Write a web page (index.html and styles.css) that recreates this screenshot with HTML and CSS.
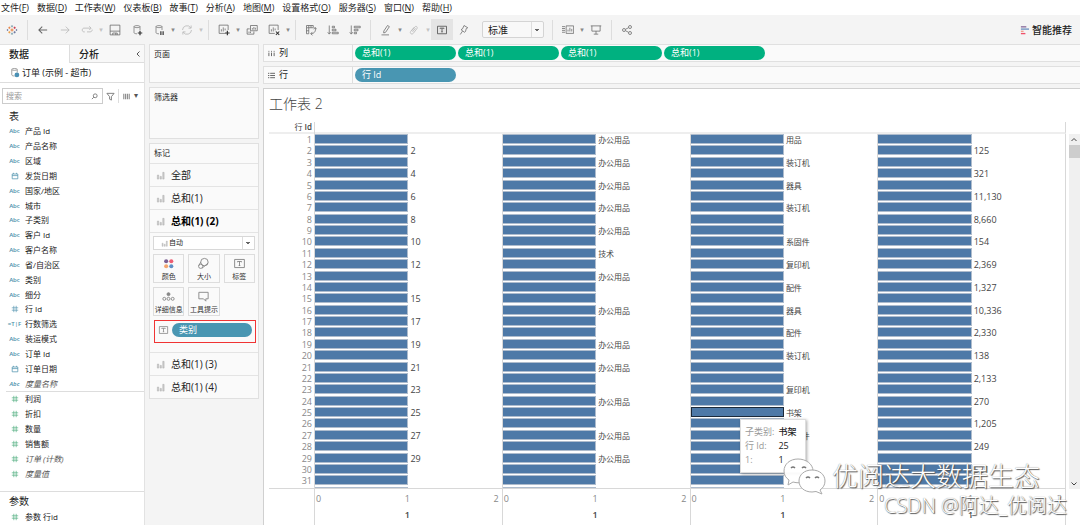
FILE: index.html
```html
<!DOCTYPE html>
<html lang="zh-CN">
<head>
<meta charset="utf-8">
<title>工作表 2</title>
<link rel="stylesheet" href="styles.css">
</head>
<body>
<svg class="defs" aria-hidden="true">
  <symbol id="i-bars" viewBox="0 0 10 10"><path d="M1.500 4.500v4.500h1.500V4.500zM4.500 6v3H6V6zM7.500 1.500V9H9V1.500z" fill="#ccc" stroke="#aaa" stroke-width=".5"/></symbol>
  <symbol id="i-db" viewBox="0 0 16 16"><path d="M4 3.500v8c0 1 2 1.600 4 1.600M12 8V3.500M4 3.500c0-1.800 8-1.800 8 0s-8 1.800-8 0" fill="none" stroke="#777"/></symbol>
  <symbol id="i-t" viewBox="0 0 16 16"><path d="M2 3h12v10H2zM5.500 6.500v-1h5v1M8 5.500v5M7 10.500h2" fill="none" stroke="currentColor"/></symbol>
  <symbol id="i-cal" viewBox="0 0 10 10"><path d="M1.500 2.500h7v6h-7zM1.500 4.500h7M3 1v1.500M7 1v1.500" fill="none" stroke="#4a90ab" stroke-width=".9"/></symbol>
  <symbol id="i-hash" viewBox="0 0 10 10"><path d="M3.500 1v8M6.500 1v8M1 3.500h8M1 6.500h8" fill="none" stroke="currentColor" stroke-width=".8"/></symbol>
</svg>
<div class="app">
  <nav class="menu">
    <a href="#">文件(<u>F</u>)</a><a href="#">数据(<u>D</u>)</a><a href="#">工作表(<u>W</u>)</a><a href="#">仪表板(<u>B</u>)</a><a href="#">故事(<u>T</u>)</a><a href="#">分析(<u>A</u>)</a><a href="#">地图(<u>M</u>)</a><a href="#">设置格式(<u>O</u>)</a><a href="#">服务器(<u>S</u>)</a><a href="#">窗口(<u>N</u>)</a><a href="#">帮助(<u>H</u>)</a>
  </nav>
  <div class="toolbar">
    <button class="tb" aria-label="开始"><svg viewBox="0 0 16 16"><path d="M8 6v4M6 8h4" stroke="#e8762d" stroke-width="1.200"/><path d="M8 1.500v3M6.500 3h3M8 11.500v3M6.500 13h3" stroke="#7199a6"/><path d="M4.500 3.500v3M3 5h3" stroke="#e8762d"/><path d="M11.500 3.500v3M10 5h3" stroke="#c72035"/><path d="M4.500 9.500v3M3 11h3" stroke="#eb912c"/><path d="M11.500 9.500v3M10 11h3" stroke="#5b6591"/><path d="M2 7v2M1 8h2M14 7v2M13 8h2" stroke="#5b6591"/></svg></button>
    <i class="sep"></i>
    <button class="tb" aria-label="后退"><svg viewBox="0 0 16 16"><path d="M13.500 8h-11M7 3.500L2.500 8 7 12.500" stroke-width="1.400"/></svg></button>
    <button class="tb dim" aria-label="前进"><svg viewBox="0 0 16 16"><path d="M2.500 8h11M9 3.500L13.500 8 9 12.500"/></svg></button>
    <button class="tb dim" aria-label="重做"><svg viewBox="0 0 16 16"><path d="M5 10.500H4C.8 10.500 1 5.500 4 5.500h9M11 3l2.500 2.500L11 8M8 10.500h4c2 0 3-1.500 3-3"/></svg></button>
    <button class="caret dim" aria-label="更多">▾</button>
    <button class="tb" aria-label="保存"><svg viewBox="0 0 16 16"><path d="M1.500 1.500h13v13h-13zM1.500 9.500h13M5 14.500v-2.500h6v2.500M9 12v2.500"/></svg></button>
    <button class="tb" aria-label="新建数据源"><svg viewBox="0 0 16 16"><use href="#i-db"/><path d="M12 9v6M9 12h6" stroke="#333" stroke-width="1.600"/></svg></button>
    <button class="tb" aria-label="暂停更新"><svg viewBox="0 0 16 16"><use href="#i-db"/><path d="M10.500 9.500v5M13.500 9.500v5" stroke="#333" stroke-width="1.600"/></svg></button>
    <button class="caret" aria-label="更多">▾</button>
    <button class="tb dim" aria-label="刷新"><svg viewBox="0 0 16 16"><path d="M2 8a6 6 0 0 1 11-3M14 8a6 6 0 0 1-11 3M13.500 2v3.500H10M2.500 14v-3.500H6"/></svg></button>
    <button class="caret dim" aria-label="更多">▾</button>
    <i class="sep"></i>
    <button class="tb" aria-label="新建工作表"><svg viewBox="0 0 16 16"><path d="M10 12.500H1.500v-11h12V8M4.500 10V7M7 10V4.500M9.500 8.500V6"/><path d="M12.500 9v6M9.500 12h6" stroke="#333" stroke-width="1.600"/></svg></button>
    <button class="caret" aria-label="更多">▾</button>
    <button class="tb" aria-label="复制"><svg viewBox="0 0 16 16"><path d="M6 2h9v7H6zM5 6.500H1.500v7h9V10M8.500 7.500v-2M10.500 7.500V4M12.500 7.500V5M4 12v-2M6 12v-2"/></svg></button>
    <button class="tb" aria-label="清除"><svg viewBox="0 0 16 16"><path d="M9 12.500H1.500v-11h12V8M4.500 10V7M7 10V4.500M9.500 8.500V6"/><path d="M10.500 10l4.500 4.500M15 10l-4.500 4.500" stroke="#333" stroke-width="1.400"/></svg></button>
    <button class="caret" aria-label="更多">▾</button>
    <i class="sep"></i>
    <button class="tb" aria-label="交换行和列"><svg viewBox="0 0 16 16"><path d="M2 2h9v3H2zM2 5v8h3V5M5 2v3M8 2v3M2 9h3M13.500 5c1.500 4-1 8-5.500 8M10 10.500L7.500 13l2.500 2M11.500 7l2-2.500L15.500 7"/></svg></button>
    <button class="tb" aria-label="升序"><svg viewBox="0 0 16 16"><path d="M3 2v11M1 11l2 2.500L5 11M7 3h3v2H7zM7 7h5v2H7zM7 11h8v2H7z"/></svg></button>
    <button class="tb" aria-label="降序"><svg viewBox="0 0 16 16"><path d="M3 2v11M1 11l2 2.500L5 11M7 3h8v2H7zM7 7h5v2H7zM7 11h3v2H7z"/></svg></button>
    <i class="sep"></i>
    <button class="tb" aria-label="突出显示"><svg viewBox="0 0 16 16"><path d="M5 9.500L10 2l2.500 1.500-5 7.500L5 12zM2 14.500h10"/></svg></button>
    <button class="caret" aria-label="更多">▾</button>
    <button class="tb dim" aria-label="组"><svg viewBox="0 0 16 16"><path d="M5 9l4-5c2-2 4 0 3 2l-5 6.500c-2 2-5 0-3.500-2.500L8 4.500M6 10.500l4-5"/></svg></button>
    <button class="caret dim" aria-label="更多">▾</button>
    <button class="tb on" aria-label="显示标签"><svg viewBox="0 0 16 16"><use href="#i-t"/></svg></button>
    <button class="tb" aria-label="固定"><svg viewBox="0 0 16 16"><path d="M8 2l5 3-2 1-1 4-1.500 1L4 7.500 6 6.500zM6 9.500L3 14"/></svg></button>
    <select class="fit" aria-label="适合"><option>标准</option></select>
    <i class="sep"></i>
    <button class="tb" aria-label="显示卡"><svg viewBox="0 0 16 16"><path d="M5.500 2.500h10v10h-10zM8 10V7.500M10.500 10V5M13 10V6.500M0 3.500h4M0 6h4M0 8.500h4M0 11h4"/></svg></button>
    <button class="caret" aria-label="更多">▾</button>
    <button class="tb" aria-label="演示模式"><svg viewBox="0 0 16 16"><path d="M1 2.500h14M2.500 2.500v7h11v-7M8 9.500v4M5 13.500h6"/></svg></button>
    <i class="sep"></i>
    <button class="tb" aria-label="共享"><svg viewBox="0 0 16 16"><circle cx="4" cy="8" r="2"/><circle cx="12" cy="4" r="2"/><circle cx="12" cy="12" r="2"/><path d="M6 7l4-2M6 9l4 2"/></svg></button>
    <button class="showme"><svg viewBox="0 0 10 10"><path d="M1 1.500h6" stroke="#8a6c9c" stroke-width="1.500"/><path d="M1 4h9" stroke="#6f93c0" stroke-width="1.500"/><path d="M1 6.500h3" stroke="#f2a08e" stroke-width="1.500"/><path d="M1 9h5" stroke="#f0506a" stroke-width="1.500"/></svg>智能推荐</button>
  </div>

  <main class="work">
    <aside class="data">
      <div class="tabs"><button class="tab">数据</button><button class="tab off">分析<svg viewBox="0 0 6 8"><path d="M4.500 1.500L2 4l2.500 2.500" fill="none" stroke="#555"/></svg></button></div>
      <div class="source"><svg viewBox="0 0 16 16"><use href="#i-db"/><circle cx="11.500" cy="11.500" r="3.500" fill="#4a90b4"/></svg>订单 (示例 - 超市)</div>
      <div class="find">
        <label class="box"><input type="text" placeholder="搜索" aria-label="搜索"><svg viewBox="0 0 8 8"><circle cx="4.800" cy="3.200" r="2.200" fill="none" stroke="#777"/><path d="M3.200 4.800L1 7" stroke="#777"/></svg></label>
        <button aria-label="筛选"><svg viewBox="0 0 10 10"><path d="M1 1.500h8L6 5.200V9L4 8V5.200z" fill="none" stroke="#777"/></svg></button>
        <i></i>
        <button aria-label="视图"><svg viewBox="0 0 10 10"><path d="M2 2v6M4 2v6M6 2v6M8 2v6" stroke="#888" stroke-width="1.200"/></svg></button>
        <button class="arrow" aria-label="更多">▾</button>
      </div>
      <h2>表</h2>
      <ul class="fields dims" id="dims"></ul>
      <ul class="fields meas" id="meas"></ul>
      <div class="params"><h2>参数</h2><ul class="fields"><li class="g"><b><svg viewBox="0 0 10 10"><use href="#i-hash"/></svg></b>参数 行id</li></ul></div>
    </aside>

    <aside class="cards">
      <section class="card pages"><h3>页面</h3></section>
      <section class="card filters"><h3>筛选器</h3></section>
      <section class="card marks">
        <h3>标记</h3>
        <button class="mark"><svg><use href="#i-bars"/></svg>全部</button>
        <button class="mark"><svg><use href="#i-bars"/></svg>总和(1)</button>
        <button class="mark cur"><svg><use href="#i-bars"/></svg>总和(1) (2)</button>
        <div class="panel">
          <div class="type"><svg><use href="#i-bars"/></svg><select aria-label="标记类型"><option>自动</option></select></div>
          <div class="props">
            <button><svg viewBox="0 0 14 14"><circle cx="4.500" cy="4.500" r="2.200" fill="#7b5f92"/><circle cx="10" cy="4.500" r="2.200" fill="#ee5d72"/><circle cx="4.500" cy="10" r="2.200" fill="#f5a66e"/><circle cx="10" cy="10" r="2.200" fill="#5f8fc4"/></svg>颜色</button>
            <button><svg viewBox="0 0 14 14"><g fill="none" stroke="#888"><circle cx="8" cy="5.500" r="4"/><circle cx="4" cy="10" r="2.300"/><path d="M4 5.500L1.800 9.500M12 6.500L5.500 12"/></g></svg>大小</button>
            <button><svg viewBox="0 0 16 16"><use href="#i-t"/></svg>标签</button>
            <button><svg viewBox="0 0 14 14"><g fill="none" stroke="#888"><circle cx="7" cy="4.500" r="1.600" fill="#888"/><circle cx="2.500" cy="9.500" r="1.600"/><circle cx="7" cy="9.500" r="1.600"/><circle cx="11.500" cy="9.500" r="1.600"/></g></svg>详细信息</button>
            <button><svg viewBox="0 0 14 14"><path d="M2 2.500h10v7H9.500v2.500L7 9.500H2z" fill="none" stroke="#888"/></svg>工具提示</button>
          </div>
          <div class="drop"><svg viewBox="0 0 16 16"><use href="#i-t"/></svg><span class="pill dim-pill">类别</span></div>
        </div>
        <button class="mark"><svg><use href="#i-bars"/></svg>总和(1) (3)</button>
        <button class="mark"><svg><use href="#i-bars"/></svg>总和(1) (4)</button>
      </section>
    </aside>

    <section class="view">
      <div class="shelf"><div class="name"><svg viewBox="0 0 8 8"><path d="M1 3v4M4 3v4M7 3v4M1 1v1M4 1v1M7 1v1" stroke="#555"/></svg>列</div><span class="pill">总和(1)</span><span class="pill">总和(1)</span><span class="pill">总和(1)</span><span class="pill">总和(1)</span></div>
      <div class="shelf"><div class="name"><svg viewBox="0 0 8 8"><path d="M2.500 1.500H8M2.500 4H8M2.500 6.500H8M0 1.500h1.500M0 4h1.500M0 6.500h1.500" stroke="#555"/></svg>行</div><span class="pill dim-pill">行 Id</span></div>
      <div class="sheet">
        <h1>工作表 2</h1>
        <div class="chart">
          <div class="head"><span>行 <b>Id</b></span></div>
          <div class="plot"><div class="rows" id="rows"></div></div>
          <div class="scroll"><svg viewBox="0 0 10 10"><path d="M2.500 6.500L5 4l2.500 2.500"/></svg><i></i><svg viewBox="0 0 10 10"><path d="M2.500 4L5 6.500 7.500 4"/></svg></div>
          <div class="axes" id="axes"></div>
        </div>
      </div>
    </section>
  </main>
  <dl class="tip"><dt>子类别:</dt><dd>书架</dd><dt>行 Id:</dt><dd>25</dd><dt>1:</dt><dd>1</dd></dl>
  <div class="brand"><svg viewBox="0 0 44 38"><g fill="#fff" stroke="#aaa"><path d="M16 2C8 2 2 7 2 14c0 4 2 7 5 9l-1 5 5-3c2 .6 4 .8 6 .8C25 26 31 21 31 14S24 2 16 2z" fill-opacity=".9"/><path d="M30 13c-8 0-13 5-13 11s5 11 13 11l4-.5 6 2.500-2-4c3-2 5-5 5-9 0-6-5-11-13-11z"/></g><path d="M9 11q2-2 4 0M20 11q2-2 4 0M24 21q2-2 4 0M33 21q2-2 4 0" fill="none" stroke="#777" stroke-width="1.500"/></svg>优阅达大数据生态</div>
  <div class="credit">CSDN @阿达_优阅达</div>
</div>
<script src="chart.js"></script>
</body>
</html>
```
FILE: styles.css
```css
* { box-sizing: border-box; }
body { margin: 0; font: 8px/12px "Open Sans", "Noto Sans CJK SC", sans-serif; color: #222; }
h1, h2, h3, ul, dl, dd { margin: 0; padding: 0; font-weight: 400; }
button, select, input { font: inherit; color: inherit; border: 0; padding: 0; margin: 0; background: none; }
.defs { position: absolute; width: 0; height: 0; }
.app { position: relative; display: flex; flex-direction: column; height: 100vh; background: #f4f4f4; overflow: hidden; }

.menu { display: flex; flex: none; gap: 8px; height: 15px; padding: 2px 1px 0; background: #fff; font-size: 9px; }
.menu a { color: #222; text-decoration: none; white-space: nowrap; }

.toolbar { display: flex; align-items: center; height: 29px; flex: none; padding: 0 8px 0 1px; }
.tb { width: 22px; height: 21px; display: grid; place-items: center; color: #444; }
.tb svg { width: 12px; height: 12px; fill: none; stroke: #666; }
.tb.dim, .caret.dim { opacity: .45; }
.tb.on { background: #e4e4e4; }
.caret { width: 6px; font: 7px/12px "DejaVu Sans", sans-serif; color: #888; }
.sep { width: 1px; height: 20px; margin: 0 4px; background: #ddd; }
.fit, .type select {
  appearance: none;
  background:
    linear-gradient(#ddd, #ddd) right 11px center / 1px 15px no-repeat,
    linear-gradient(45deg, transparent 50%, #666 50%) right 6px center / 2px 2px no-repeat,
    linear-gradient(-45deg, transparent 50%, #666 50%) right 4px center / 2px 2px no-repeat;
}
.fit { width: 62px; height: 17px; margin: 0 4px 0 7px; padding: 0 5px; border: 1px solid #d4d4d4; border-radius: 2px; font-size: 10px; background-color: #f8f8f8; }
.showme { display: flex; align-items: center; gap: 3px; margin-left: auto; font-size: 10px; font-weight: 500; }
.showme svg { width: 9px; height: 10px; }

.work { flex: 1; min-height: 0; display: grid; grid-template-columns: 145px 110px 1fr; grid-template-rows: minmax(0, 1fr); column-gap: 4px; }

.data { display: flex; flex-direction: column; background: #fff; border-right: 1px solid #e2e2e2; border-top: 1px solid #e2e2e2; }
.tabs { display: flex; flex: none; height: 18px; font-size: 10px; }
.tab { width: 69px; padding-left: 9px; text-align: left; font-weight: 500; }
.tab.off { display: flex; flex: 1; align-items: center; justify-content: space-between; padding-right: 3px; background: #f8f8f8; border-left: 1px solid #ddd; border-bottom: 1px solid #ddd; }
.tab svg { width: 6px; height: 8px; }
.source { display: flex; flex: none; align-items: center; gap: 2px; height: 20px; padding-left: 9px; border-bottom: 1px solid #ddd; font-size: 9px; }
.source svg { width: 11px; height: 11px; }
.find { display: flex; flex: none; align-items: center; gap: 3px; margin: 5px 2px; }
.find .box { display: flex; align-items: center; width: 101px; height: 16px; padding: 0 4px 0 3px; border: 1px solid #ccc; }
.find input { width: 0; flex: 1; outline: 0; }
.find input::placeholder { color: #999; }
.box svg { width: 7px; height: 7px; }
.find button { height: 10px; }
.find button svg { display: block; width: 9px; height: 9px; }
.find > i { width: 1px; height: 14px; background: #ddd; }
.find .arrow { font: 8px/10px "DejaVu Sans", sans-serif; color: #555; }
.data h2 { padding-left: 9px; font-size: 10px; line-height: 14px; }
.fields { display: grid; flex: none; grid-auto-rows: 1fr; list-style: none; }
.fields li { display: grid; grid-template-columns: 17px 1fr; align-items: center; padding-left: 6px; column-gap: 2px; white-space: nowrap; }
.fields b { display: grid; place-items: center; font-size: 6px; font-weight: 600; color: #4a90ab; }
.fields b svg { width: 8px; height: 8px; }
.fields .g b { color: #45a878; }
.fields .it { font-style: italic; color: #555; }
.dims { height: 267px; margin-top: 1px; }
.meas { height: 90px; margin-left: 6px; border-top: 1px solid #ddd; }
.meas li { margin-left: -6px; }
.params { margin-top: 10px; border-top: 1px solid #ddd; }
.params h2 { line-height: 18px; }
.params li { height: 14px; }

.cards { display: flex; flex-direction: column; gap: 4px; }
.card { flex: none; border: 1px solid #e0e0e0; background: #fafafa; }
.card h3 { padding: 3px 4px; font-size: 8px; }
.pages { height: 39px; }
.filters { height: 52px; }
.marks h3 { height: 19px; }
.mark { display: flex; align-items: center; gap: 6px; width: 100%; height: 23px; padding-left: 6px; border-top: 1px solid #e4e4e4; font-size: 10px; }
.mark svg, .type svg { width: 9px; height: 9px; }
.mark.cur { color: #000; font-weight: 700; }
.panel { padding: 3px 3px 9px; border-top: 1px solid #e4e4e4; }
.type { display: flex; align-items: center; height: 14px; padding-left: 7px; border: 1px solid #d8d8d8; background: #fff; font-size: 7px; }
.type select { flex: 1; padding-left: 1px; }
.type svg { width: 7px; height: 7px; }
.props { display: grid; grid-template-columns: repeat(3, 1fr); gap: 4px; margin: 4px 0; }
.props button { display: flex; flex-direction: column; align-items: center; justify-content: space-between; height: 29px; padding-top: 2px; border: 1px solid #ddd; color: #333; line-height: 11px; white-space: nowrap; font-size: 7px; min-width: 0; }
.props svg { width: 13px; height: 13px; color: #777; }
.drop { display: flex; gap: 3px; height: 23px; margin: 0 -1px 0 1px; padding: 2px 3px 0; border: 1px solid #f03434; }
.drop svg { width: 11px; height: 14px; color: #777; }
.pill { display: block; width: 101px; height: 14px; padding-left: 7px; border-radius: 7px; background: #00b180; color: #fff; font-size: 9px; line-height: 14px; }
.dim-pill { background: #4996b2; }
.drop .pill { flex: 1; }

.view { display: flex; flex-direction: column; min-width: 0; }
.shelf { display: flex; gap: 2px; align-items: center; flex: none; height: 18px; margin-bottom: 4px; border: 1px solid #e0e0e0; border-right: 0; background: #fafafa; }
.shelf .name { display: flex; align-items: center; gap: 4px; width: 89px; height: 16px; padding-left: 4px; border-right: 1px solid #ddd; font-size: 9px; }
.name svg { width: 7px; height: 7px; }
.sheet { display: flex; flex: 1; flex-direction: column; min-height: 0; padding-left: 5px; background: #fff; border: 1px solid #d0d0d0; border-width: 1px 0 0 1px; }
.sheet h1 { padding: 5px 0 8px; font-size: 14px; line-height: 20px; font-weight: 300; color: #444; }
.chart { flex: 1; min-height: 0; display: grid; grid-template-columns: 1fr 11px; column-gap: 3px; grid-template-rows: 12px minmax(0, 1fr) 36px; font-size: 9px; color: #444; }
.head { display: flex; border-right: 1px solid #d8d8d8; border-bottom: 2px solid #eee; }
.head span { width: 46px; height: 12px; padding-right: 2px; text-align: right; line-height: 10px; font-size: 8px; border-right: 1px solid #d8d8d8; }
.head b { font-weight: 600; }
.plot { grid-row: 2; grid-column: 1; min-height: 0; overflow: hidden; border-right: 1px solid #d8d8d8; border-bottom: 1px solid #d8d8d8; }
.rows { display: grid; grid-auto-rows: 1fr; height: 364px; }
.row { display: grid; grid-template-columns: 45px repeat(4, 1fr); line-height: 11px; min-height: 0; }
.row .id { padding-right: 2px; text-align: right; color: #888; }
.cell { display: flex; gap: 2px; border-left: 1px solid #d8d8d8; min-height: 0; white-space: nowrap; }
.bar { width: 50%; height: 10px; background: #4e79a7; border: 1px solid #aebccd; border-left: 0; }
.bar.sel { border: 1px solid #1c2a3a; }
.cell .zh { font-size: 8px; }
.scroll { grid-row: 2; grid-column: 2; display: flex; flex-direction: column; background: #f0f0f0; }
.scroll svg { width: 10px; height: 11px; fill: none; stroke: #444; }
.scroll i { height: 13px; background: #cdcdcd; margin-bottom: auto; }
.axes { grid-row: 3; display: grid; grid-template-columns: 45px repeat(4, 1fr); border-right: 1px solid #d8d8d8; color: #888; }
.axis { display: grid; grid-template-columns: 1fr 1fr 1fr; padding: 4px 3px 0 1px; border-left: 1px solid #d8d8d8; line-height: 12px; }
.axis span:nth-child(2) { text-align: center; }
.axis span:nth-child(3) { text-align: right; }
.axis b { grid-column: 1 / -1; text-align: center; font-weight: 600; color: #444; line-height: 20px; }

.tip { position: absolute; left: 740px; top: 419px; display: grid; grid-template-columns: auto 1fr; column-gap: 4px; width: 66px; padding: 5px 4px; border: 1px solid #ddd; background: #fff; box-shadow: 1px 1px 3px #0005; font-size: 9px; line-height: 14px; color: #999; white-space: nowrap; }
.tip dd { color: #222; font-weight: 500; }
.brand, .credit { position: absolute; white-space: nowrap; }
.brand { left: 782px; top: 457px; display: flex; align-items: center; gap: 6px; font-size: 26px; line-height: 38px; font-weight: 300; color: #fff; text-shadow: 1px 1px 1px #555, 0 0 1px #777; }
.brand svg { width: 44px; height: 38px; }
.credit { left: 884px; top: 493px; font-size: 20px; line-height: 26px; font-weight: 300; color: #fff; text-shadow: 1px 1px 1px #555, 0 0 1px #777; }
```
FILE: chart.js
```js
const dims = [
  ["a", "产品 Id"], ["a", "产品名称"], ["a", "区域"], ["d", "发货日期"], ["a", "国家/地区"], ["a", "城市"],
  ["a", "子类别"], ["a", "客户 Id"], ["a", "客户名称"], ["a", "省/自治区"], ["a", "类别"], ["a", "细分"],
  ["n", "行 Id"], ["t", "行数筛选"], ["a", "装运模式"], ["a", "订单 Id"], ["d", "订单日期"], ["a", "度量名称", "it"]
];
const meas = [["n", "利润"], ["n", "折扣"], ["n", "数量"], ["n", "销售额"], ["n", "订单 (计数)", "it"], ["n", "度量值", "it"]];
const svg = id => `<svg viewBox="0 0 10 10"><use href="#${id}"/></svg>`;
const icons = { a: "Abc", t: "=T|F", d: svg("i-cal"), n: svg("i-hash") };
const list = (items, cls) => items.map(([k, t, it]) => `<li class="${cls} ${it || ""}"><b>${icons[k]}</b>${t}</li>`).join("");
document.getElementById("dims").innerHTML = list(dims, "");
document.getElementById("meas").innerHTML = list(meas, "g");

const o = "办公用品";
const labels = [
  { 2: 2, 4: 4, 6: 6, 8: 8, 10: 10, 12: 12, 15: 15, 17: 17, 19: 19, 21: 21, 23: 23, 25: 25, 27: 27, 29: 29, 32: 32 },
  { 1: o, 3: o, 5: o, 7: o, 9: o, 11: "技术", 13: o, 16: o, 19: o, 21: o, 24: o, 27: o, 29: o },
  { 1: "用品", 3: "装订机", 5: "器具", 7: "装订机", 10: "系固件", 12: "复印机", 14: "配件", 16: "器具", 18: "配件", 20: "装订机", 23: "复印机", 25: "书架", 27: "系固件" },
  { 2: "125", 4: "321", 6: "11,130", 8: "8,660", 10: "154", 12: "2,369", 14: "1,327", 16: "10,336", 18: "2,330", 20: "138", 22: "2,133", 24: "270", 26: "1,205", 28: "249", 30: "521" }
];
let html = "";
for (let r = 1; r <= 32; r++) {
  html += `<div class="row"><span class="id">${r}</span>`;
  labels.forEach((col, c) => {
    const zh = c === 1 || c === 2 ? "zh" : "";
    html += `<div class="cell"><div class="bar ${c === 2 && r === 25 ? "sel" : ""}"></div><span class="${zh}">${col[r] || ""}</span></div>`;
  });
  html += "</div>";
}
document.getElementById("rows").innerHTML = html;
document.getElementById("axes").innerHTML = "<span></span>" + labels.map(() => '<div class="axis"><span>0</span><span>1</span><span>2</span><b>1</b></div>').join("");
```
